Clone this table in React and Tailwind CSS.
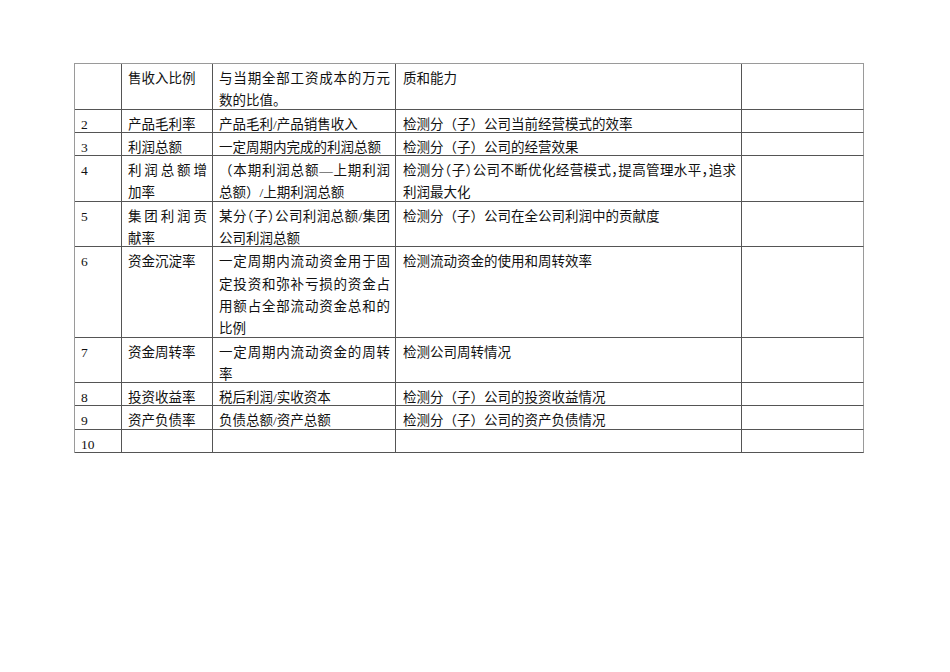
const rows = [
  { no: '', name: '售收入比例', formula: '与当期全部工资成本的万元数的比值。', goal: '质和能力' },
  { no: '2', name: '产品毛利率', formula: '产品毛利/产品销售收入', goal: '检测分（子）公司当前经营模式的效率' },
  { no: '3', name: '利润总额', formula: '一定周期内完成的利润总额', goal: '检测分（子）公司的经营效果' },
  {
    no: '4',
    name: '利润总额增加率',
    formula: '（本期利润总额—上期利润总额）/上期利润总额',
    goal: '检测分（子）公司不断优化经营模式，提高管理水平，追求利润最大化',
    goalHalt: true,
  },
  {
    no: '5',
    name: '集团利润贡献率',
    formula: '某分（子）公司利润总额/集团公司利润总额',
    formulaHalt: true,
    goal: '检测分（子）公司在全公司利润中的贡献度',
  },
  { no: '6', name: '资金沉淀率', formula: '一定周期内流动资金用于固定投资和弥补亏损的资金占用额占全部流动资金总和的比例', goal: '检测流动资金的使用和周转效率' },
  { no: '7', name: '资金周转率', formula: '一定周期内流动资金的周转率', goal: '检测公司周转情况' },
  { no: '8', name: '投资收益率', formula: '税后利润/实收资本', goal: '检测分（子）公司的投资收益情况' },
  { no: '9', name: '资产负债率', formula: '负债总额/资产总额', goal: '检测分（子）公司的资产负债情况' },
  { no: '10', name: '', formula: '', goal: '' },
];

const cell = 'border-r border-b border-[#555] pl-[6px] pr-[5px] text-justify';

// text sits low in each line, like the Word original
function Txt({ children, halt }) {
  let cls = 'align-[-3.5px] leading-[15px]';
  if (halt) cls += " [font-feature-settings:'halt']";
  return <span className={cls}>{children}</span>;
}

export default function App() {
  return (
    <div className="min-h-[672px] w-[950px] bg-white pt-[63px] pl-[74px] text-[13.5px] leading-[22.3px] text-[#111] [font-family:'Liberation_Serif','Noto_Sans_CJK_SC',serif]">
      <div className="grid w-[790px] grid-cols-[47px_91px_183px_346px_122px] border-t border-l border-t-[#9a9a9a] border-l-[#9a9a9a]">
        {rows.map((r, i) => (
          <div key={i} className="contents">
            <div className={cell}><Txt>{r.no}</Txt></div>
            <div className={cell}><Txt>{r.name}</Txt></div>
            <div className={cell}><Txt halt={r.formulaHalt}>{r.formula}</Txt></div>
            <div className={`${cell} pl-[7px]`}><Txt halt={r.goalHalt}>{r.goal}</Txt></div>
            <div className={`${cell} border-r-[#9a9a9a]`}></div>
          </div>
        ))}
      </div>
    </div>
  );
}
